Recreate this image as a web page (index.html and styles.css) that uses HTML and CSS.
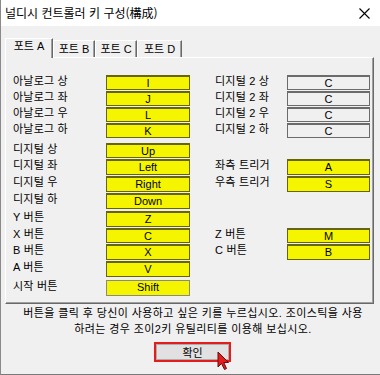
FILE: index.html
```html
<!DOCTYPE html>
<html lang="ko">
<head>
<meta charset="utf-8">
<title>널디시 컨트롤러 키 구성</title>
<link rel="stylesheet" href="styles.css">
</head>
<body>
<div class="window">
  <div class="titlebar">
    <span class="title">널디시 컨트롤러 키 구성(構成)</span>
    <svg class="close" width="11" height="11" viewBox="0 0 11 11"><path d="M0.5 0.5 L10.5 10.5 M10.5 0.5 L0.5 10.5" stroke="#000" stroke-width="1.1" fill="none"/></svg>
  </div>
  <div class="client">
    <div class="tabs">
      <div class="tab sel">포트 A</div>
      <div class="tab tb">포트 B</div>
      <div class="tab tc">포트 C</div>
      <div class="tab td">포트 D</div>
    </div>
    <div class="panel">
      <div class="group g1">
        <div class="row r16"><span class="lbl">아날로그 상</span><span class="key y">I</span><span></span><span class="lbl">디지털 2 상</span><span class="key g">C</span></div>
        <div class="row r16"><span class="lbl">아날로그 좌</span><span class="key y">J</span><span></span><span class="lbl">디지털 2 좌</span><span class="key g">C</span></div>
        <div class="row r16"><span class="lbl">아날로그 우</span><span class="key y">L</span><span></span><span class="lbl">디지털 2 우</span><span class="key g">C</span></div>
        <div class="row r16"><span class="lbl">아날로그 하</span><span class="key y">K</span><span></span><span class="lbl">디지털 2 하</span><span class="key g">C</span></div>
      </div>
      <div class="group g2">
        <div class="row r16"><span class="lbl">디지털 상</span><span class="key y">Up</span></div>
        <div class="row r17"><span class="lbl">디지털 좌</span><span class="key y">Left</span><span></span><span class="lbl">좌측 트리거</span><span class="key y">A</span></div>
        <div class="row r17"><span class="lbl">디지털 우</span><span class="key y">Right</span><span></span><span class="lbl">우측 트리거</span><span class="key y">S</span></div>
        <div class="row r17"><span class="lbl">디지털 하</span><span class="key y">Down</span></div>
      </div>
      <div class="group g3">
        <div class="row r17"><span class="lbl">Y 버튼</span><span class="key y">Z</span></div>
        <div class="row r16"><span class="lbl">X 버튼</span><span class="key y">C</span><span></span><span class="lbl">Z 버튼</span><span class="key y">M</span></div>
        <div class="row r17"><span class="lbl">B 버튼</span><span class="key y">X</span><span></span><span class="lbl">C 버튼</span><span class="key y">B</span></div>
        <div class="row r17"><span class="lbl">A 버튼</span><span class="key y">V</span></div>
      </div>
      <div class="group g4">
        <div class="row r17"><span class="lbl">시작 버튼</span><span class="key y shift">Shift</span></div>
      </div>
    </div>
    <p class="help">버튼을 클릭 후 당신이 사용하고 싶은 키를 누르십시오. 조이스틱을 사용<br>하려는 경우 조이2키 유틸리티를 이용해 보십시오.</p>
    <div class="actions"><button class="ok" type="button">확인</button></div>
  </div>
  <svg class="cursor" width="13" height="20" viewBox="0 0 13 20"><path d="M1 1 L1 16 L4.5 12.5 L7.5 18.5 L9.5 17.5 L6.8 11.5 L11.5 11.5 Z" fill="#e11d1d" stroke="#6a0c0c" stroke-width="1" stroke-linejoin="round"/></svg>
</div>
</body>
</html>
```

FILE: styles.css
```css
html, body {
  margin: 0;
  padding: 0;
  background: #f0f0f0;
}

body {
  width: 380px;
  height: 375px;
  overflow: hidden;
  font-family: "Liberation Sans", "Noto Sans CJK KR", sans-serif;
  font-size: 11px;
  color: #000;
}

.window {
  position: relative;
  box-sizing: border-box;
  width: 380px;
  height: 375px;
  background: #f0f0f0;
  border-left: 1px solid #8a8a8a;
  border-bottom: 1px solid #7a7a7a;
}

.titlebar {
  height: 26px;
  background: #ffffff;
  display: flex;
  align-items: center;
  justify-content: space-between;
  padding: 0 10px 0 4px;
}

.title {
  font-family: "Noto Sans CJK KR", sans-serif;
  font-size: 12px;
  line-height: 16px;
  color: #000;
}

.close {
  display: block;
}

.client {
  padding: 12px 0 0 4px;
}

.tabs {
  display: flex;
  align-items: flex-end;
  height: 19px;
  position: relative;
  z-index: 2;
}

.tab {
  box-sizing: border-box;
  height: 17px;
  background: #f0f0f0;
  border-top: 1px solid #ffffff;
  border-left: 1px solid #ffffff;
  border-right: 1px solid #696969;
  box-shadow: inset -1px 0 0 #a0a0a0;
  text-align: center;
  line-height: 14px;
  padding-top: 1px;
  width: 42px;
}

.tab.sel {
  width: 48px;
  height: 20px;
  margin-bottom: -1px;
  padding-top: 0;
  line-height: 15px;
}

.tab.td {
  width: 45px;
}

.panel {
  box-sizing: border-box;
  width: 369px;
  height: 247px;
  border: 1px solid;
  border-color: #ffffff #696969 #696969 #ffffff;
  box-shadow: inset -1px -1px 0 #a0a0a0;
  padding: 17px 0 0 7px;
}

.group.g2 { margin-top: 4px; }
.group.g3 { margin-top: 1px; }
.group.g4 { margin-top: 2px; }

.row {
  display: grid;
  grid-template-columns: 93px 84px 25px 72px 83px;
  align-items: start;
}

.row.r16 { height: 16px; }
.row.r17 { height: 17px; }

.lbl {
  line-height: 13px;
  white-space: nowrap;
  letter-spacing: 0.2px;
}

.key {
  box-sizing: border-box;
  border: 1px solid #66640e;
  border-top-width: 2px;
  text-align: center;
  line-height: 12px;
  font-family: "Liberation Sans", sans-serif;
  font-size: 11px;
}

.row.r16 .key { height: 15px; }
.row.r17 .key { height: 16px; line-height: 13px; }

.key.y {
  background: #f5f500;
}

.key.g {
  background: #f0f0f0;
  border-color: #6b6b6b;
}

.key.shift {
  border-color: #8a8a7a;
  border-top-width: 1px;
  line-height: 14px;
}

.help {
  margin: 1px 0 0 0;
  width: 376px;
  text-align: center;
  line-height: 16px;
  font-size: 11px;
  letter-spacing: 0.4px;
}

.actions {
  width: 376px;
  display: flex;
  justify-content: center;
  margin-top: 5px;
}

.ok {
  box-sizing: border-box;
  width: 77px;
  height: 20px;
  margin: 0 0 0 -1px;
  padding: 0;
  background: #e1e1e1;
  border: 2px solid #e31d1d;
  box-shadow: inset 0 0 0 1px #adadad;
  font-family: "Noto Sans CJK KR", sans-serif;
  font-size: 11px;
  line-height: 14px;
  color: #000;
}

.cursor {
  position: absolute;
  left: 216px;
  top: 351px;
}
```
